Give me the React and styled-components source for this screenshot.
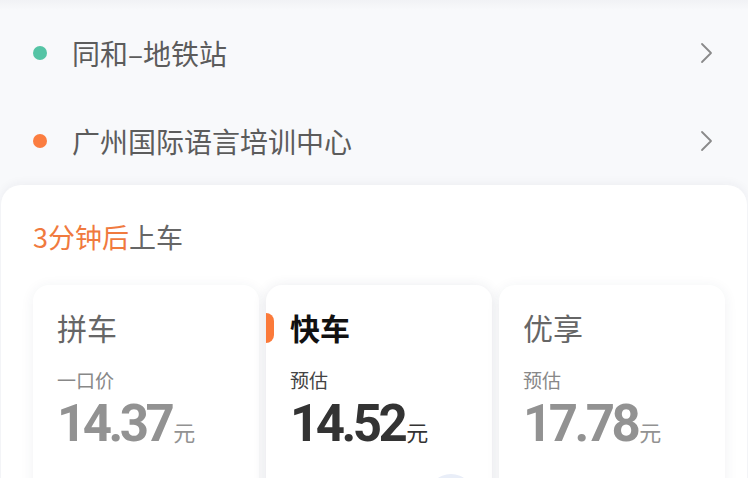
import React from "react";
import styled, { createGlobalStyle } from "styled-components";

const Global = createGlobalStyle`
  html, body { margin: 0; padding: 0; background: #f8f9fb; }
  body { font-family: "Noto Sans CJK SC", "Noto Sans", sans-serif; overflow: hidden; }
  * { box-sizing: border-box; }
`;

const Page = styled.div`
  width: 748px;
  height: 478px;
  overflow: hidden;
  background: linear-gradient(#f1f2f5 0px, #f8f9fb 10px);
  padding-top: 9px;
`;

const Route = styled.div`
  display: flex;
  flex-direction: column;
`;

const Row = styled.div`
  height: 88px;
  display: flex;
  align-items: center;
  padding: 0 34px 0 33px;
`;

const Dot = styled.span`
  width: 14px;
  height: 14px;
  border-radius: 50%;
  background: ${(p) => p.color};
  flex: none;
`;

const Place = styled.span`
  margin-left: 25px;
  flex: 1;
  font-size: 28px;
  color: #5c5c5c;
  line-height: 1;
`;

const Chevron = () => (
  <svg width="14" height="22" viewBox="0 0 14 22" fill="none">
    <path d="M2 2 L11 11 L2 20" stroke="#8a8a8a" strokeWidth="1.8" strokeLinecap="round" strokeLinejoin="round" />
  </svg>
);

const Panel = styled.div`
  margin: 0 1px;
  background: #fff;
  border-radius: 20px 20px 0 0;
  box-shadow: 0 -2px 10px rgba(30, 40, 70, 0.05);
  padding: 33px 22px 0 32px;
  height: 400px;
`;

const Eta = styled.div`
  font-size: 27px;
  line-height: 38px;
  color: #666;
`;

const Hl = styled.span`
  color: #f07a3e;
`;

const Cards = styled.div`
  margin-top: 29px;
  display: grid;
  grid-template-columns: repeat(3, 226px);
  gap: 7px;
`;

const Card = styled.div`
  position: relative;
  height: 240px;
  background: #fff;
  border-radius: 16px;
  box-shadow: 0 2px 14px rgba(40, 50, 80, ${(p) => (p.active ? 0.12 : 0.07)});
  padding: 22px 18px 0 24px;
  display: flex;
  flex-direction: column;
`;

const Tab = styled.span`
  position: absolute;
  left: 0;
  top: 28px;
  width: 8px;
  height: 30px;
  background: #fb7a3a;
  border-radius: 0 8px 8px 0;
`;

const Title = styled.div`
  font-size: 30px;
  line-height: 40px;
  color: ${(p) => (p.active ? "#111" : "#666")};
  font-weight: ${(p) => (p.active ? 700 : 400)};
`;

const Label = styled.div`
  margin-top: 20px;
  font-size: 19px;
  line-height: 26px;
  color: ${(p) => (p.active ? "#444" : "#888")};
`;

const PriceLine = styled.div`
  display: flex;
  align-items: baseline;
  margin-top: 9px;
  line-height: 44px;
  color: ${(p) => (p.active ? "#333" : "#929292")};
`;

const Num = styled.span`
  font-family: Roboto, "Noto Sans", sans-serif;
  font-weight: 700;
  font-size: 51px;
  letter-spacing: -3.5px;
`;

const Unit = styled.span`
  margin-left: 2px;
  font-size: 22px;
`;

const Foot = styled.div`
  display: flex;
  justify-content: flex-end;
  margin-top: 21px;
`;

const Radio = styled.span`
  width: 46px;
  height: 46px;
  border-radius: 50%;
  background: #e9eef8;
`;

const options = [
  { title: "拼车", label: "一口价", price: "14.37" },
  { title: "快车", label: "预估", price: "14.52", active: true },
  { title: "优享", label: "预估", price: "17.78" },
];

export default function App() {
  return (
    <Page>
      <Global />
      <Route>
        <Row>
          <Dot color="#55c4a5" />
          <Place>同和–地铁站</Place>
          <Chevron />
        </Row>
        <Row>
          <Dot color="#fb7d40" />
          <Place>广州国际语言培训中心</Place>
          <Chevron />
        </Row>
      </Route>
      <Panel>
        <Eta>
          <Hl>3分钟后</Hl>上车
        </Eta>
        <Cards>
          {options.map((o) => (
            <Card key={o.title} active={o.active}>
              {o.active && <Tab />}
              <Title active={o.active}>{o.title}</Title>
              <Label active={o.active}>{o.label}</Label>
              <PriceLine active={o.active}>
                <Num>{o.price}</Num>
                <Unit>元</Unit>
              </PriceLine>
              {o.active && (
                <Foot>
                  <Radio />
                </Foot>
              )}
            </Card>
          ))}
        </Cards>
      </Panel>
    </Page>
  );
}
